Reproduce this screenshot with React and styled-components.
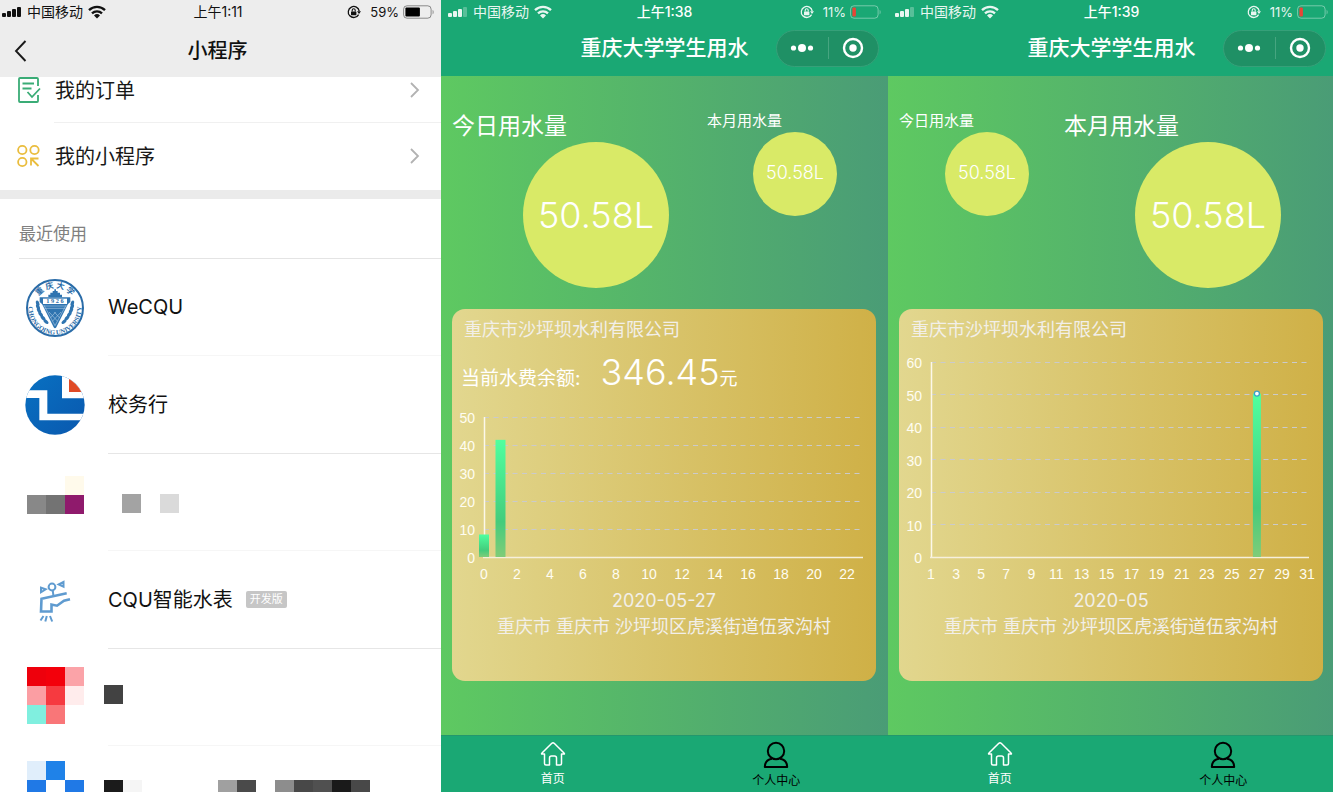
import React from "react";
import styled, { createGlobalStyle } from "styled-components";

const GlobalStyle = createGlobalStyle`
  *, *::before, *::after { box-sizing: border-box; }
  body {
    margin: 0;
    overflow-x: hidden;
    background: #fff;
    font-family: Inter, "Noto Sans CJK SC", sans-serif;
    -webkit-font-smoothing: antialiased;
  }
  a { color: inherit; text-decoration: none; }
  button { font: inherit; color: inherit; border: 0; padding: 0; background: none; cursor: pointer; }
  h1, h2, p { margin: 0; font-size: inherit; font-weight: inherit; }
  svg { display: block; flex: none; }
`;

const Page = styled.main`
  display: grid;
  grid-template-columns: 441fr 447fr 447fr;
  width: calc(100% + 2px);
  min-height: 100vh;
`;

const Phone = styled.section`
  display: flex;
  flex-direction: column;
  min-width: 0;
  background: ${(p) => p.$background || "#fff"};
`;

/* ---------- status bar ---------- */

const StatusRow = styled.div`
  display: grid;
  grid-template-columns: 1fr auto 1fr;
  align-items: center;
  height: 24px;
  padding: 0 7px 0 ${(p) => (p.$light ? 7 : 2)}px;
  background: ${(p) => (p.$light ? "#1aa874" : "#ededed")};
  color: ${(p) => (p.$light ? "#fff" : "#111")};
  font-size: 14px;
  line-height: 20px;
`;

const StatusGroup = styled.div`
  display: flex;
  align-items: center;
  justify-content: ${(p) => (p.$end ? "flex-end" : "flex-start")};
  gap: ${(p) => (p.$end ? 4 : 5)}px;
  opacity: ${(p) => (p.$soft ? 0.9 : 1)};
`;

const Clock = styled.time`
  font-size: 14px;
  font-weight: ${(p) => (p.$light ? 500 : 400)};
`;

const Percent = styled.span`
  font-size: 13px;
  padding-left: 5px;
`;

function StatusBar({ time, percent, light }) {
  const bars = [4, 6, 8, 10];
  return (
    <StatusRow $light={light}>
      <StatusGroup $soft={light}>
        <svg width="20" height="12" fill="currentColor" aria-hidden="true">
          {bars.map((h, i) => (
            <rect key={h} x={i * 5} y={11 - h} width="4" height={h} rx="1" opacity={light && i === 3 ? 0.3 : 1} />
          ))}
        </svg>
        <span>中国移动</span>
        <svg width="18" height="14" viewBox="0 0 18 14" aria-hidden="true">
          <g fill="none" stroke="currentColor" strokeWidth="2.3">
            <path d="M1 5.2a11.5 11.5 0 0 1 16 0" />
            <path d="M4 8.4a7.2 7.2 0 0 1 10 0" />
          </g>
          <path d="M9 13.4 6 10.4a4.4 4.4 0 0 1 6 0z" fill="currentColor" />
        </svg>
      </StatusGroup>
      <Clock $light={light}>{time}</Clock>
      <StatusGroup $end $soft={light}>
        <svg width="14" height="14" viewBox="0 0 14 14" aria-hidden="true">
          <path d="M11.6 9.6a5.500 5.500 0 1 1 .6-3.400" fill="none" stroke="currentColor" strokeWidth="1.300" />
          <path d="M10 6.2h4l-2 2.8z" fill="currentColor" />
          <rect x="4" y="6.4" width="5.400" height="3.800" rx=".5" fill="currentColor" />
          <path d="M5.2 6.600V5.200a1.500 1.500 0 0 1 3 0v1.400" fill="none" stroke="currentColor" strokeWidth="1.100" />
        </svg>
        <Percent>{percent}%</Percent>
        <svg width="31" height="14" viewBox="0 0 31 14" aria-hidden="true">
          <rect x=".6" y=".8" width="27.5" height="12.4" rx="3.4" fill="none" stroke="currentColor" strokeOpacity=".45" />
          <rect x="2.4" y="2.4" width={light ? 3.5 : 14.5} height="9.2" rx="1" fill={light ? "#ff3b30" : "#000"} />
          <path d="M29.6 5v4.2c1.4-.5 1.4-3.7 0-4.2z" fill="currentColor" fillOpacity=".45" />
        </svg>
      </StatusGroup>
    </StatusRow>
  );
}

/* ---------- mini program list ---------- */

const ListHeader = styled.header`
  display: grid;
  grid-template-columns: 1fr auto 1fr;
  align-items: center;
  height: 53px;
  padding: 0 20px 0 14px;
  background: #ededed;
  color: #111;
`;

const Title = styled.h1`
  font-size: ${(p) => p.$size || 20}px;
  line-height: 28px;
  font-weight: 500;
`;

const BackButton = styled.button`
  width: 14px;
  height: 24px;
`;

const MenuRow = styled.a`
  display: flex;
  align-items: flex-start;
  padding: ${(p) => (p.$scrolled ? 0 : 20)}px 20px 0 17px;
  height: ${(p) => (p.$scrolled ? 46 : 67)}px;
  gap: 14px;
  color: #181818;
  font-size: 20px;
  line-height: 28px;
`;

const MenuLabel = styled.span`
  flex: 1;
`;

const InsetRule = styled.hr`
  width: calc(100% - 54px);
  height: 1px;
  margin: -1px 0 0 54px;
  border: 0;
  background: #f0f0f0;
`;

const SectionBlock = styled.div`
  height: 69px;
  border-top: 9px solid #ebebeb;
`;

const SectionLabel = styled.h2`
  height: 60px;
  margin-left: 19px;
  padding-top: 22px;
  border-bottom: 1px solid #e4e4e4;
  color: #808080;
  font-size: 17px;
  line-height: 26px;
`;

const AppList = styled.div`
  display: grid;
  grid-auto-rows: 97px 98px;
  align-content: start;
  flex: 1 1 0;
  min-height: 0;
  overflow: hidden;
`;

const AppRow = styled.a`
  display: flex;
  align-items: center;
  gap: 23px;
  padding-left: 25px;
`;

const AppBody = styled.div`
  display: flex;
  align-items: center;
  flex: 1;
  height: 100%;
  gap: 13px;
  border-bottom: 1px solid #f6f6f6;
  color: #111;
  font-size: 20px;
  line-height: 30px;

  ${AppRow}:nth-child(even) & { border-color: #e6e6e6; }
`;

const Badge = styled.span`
  padding: 0 4px;
  border-radius: 2px;
  background: #c6c6c6;
  color: #fff;
  font-size: 11px;
  line-height: 17px;
`;

const Chevron = () => (
  <svg width="12" height="26" viewBox="0 0 12 26" fill="none" stroke="#b2b2b2" strokeWidth="1.8" aria-hidden="true">
    <path d="m2 6 7 7-7 7" />
  </svg>
);

const OrderIcon = () => (
  <svg width="24" height="26" viewBox="0 0 24 26" fill="none" stroke="#3aac76" strokeWidth="1.8" aria-hidden="true">
    <path d="M21 9V2a1 1 0 0 0-1-1H3a1 1 0 0 0-1 1v22a1 1 0 0 0 1 1h17a1 1 0 0 0 1-1v-6" />
    <path d="M5.500 6.500H17M5.500 11.500h9M10.500 15l4.500 5L23 11.500" />
  </svg>
);

const MiniIcon = () => (
  <svg width="24" height="26" viewBox="0 0 24 26" fill="none" stroke="#eabd3e" strokeWidth="1.8" aria-hidden="true">
    <circle cx="5.300" cy="7" r="4.200" />
    <circle cx="17.500" cy="7" r="4.200" />
    <circle cx="5.300" cy="19" r="4.200" />
    <path d="M14 22.500V15.500h7.500M14.500 16l7 7" />
  </svg>
);

function UniversityEmblem() {
  const leaves = [0, 1, 2, 3, 4, 5];
  return (
    <svg width="60" height="60" viewBox="-90 -90 180 180" aria-hidden="true">
      <defs>
        <path id="emblem-top" d="M-54 -26A60 60 0 0 1 54 -26" />
        <path id="emblem-bottom" d="M-77 -22A80 80 0 1 0 77 -22" />
      </defs>
      <circle r="84" fill="#fff" stroke="#2a6ca8" strokeWidth="6" />
      <g fill="#2a6ca8" fontWeight="700">
        <text fontFamily="Noto Sans CJK SC, sans-serif" fontSize="24">
          <textPath href="#emblem-top" startOffset="50%" textAnchor="middle">重 庆 大 学</textPath>
        </text>
        <text fontFamily="Liberation Serif, serif" fontSize="20">
          <textPath href="#emblem-bottom" startOffset="50%" textAnchor="middle">CHONGQING UNIVERSITY</textPath>
        </text>
      </g>
      <g fill="#2f74b0">
        <path d="M-20-32v-8h6v-6h7v-5h5v-5h5v5h5v5h7v6h6v8z" />
        <path d="M-46-32h92v14l-7 6L4 58q-4 6-8 0L-39-12l-7-6z" />
        {[-1, 1].map((side) =>
          leaves.map((n) => (
            <ellipse
              key={side + "-" + n}
              cx={side * (52 - n * n)}
              cy={-14 + n * 11}
              rx="5"
              ry="9"
              transform={`rotate(${side * (20 + n * 6)} ${side * (52 - n * n)} ${-14 + n * 11})`}
            />
          ))
        )}
      </g>
      <rect x="-36" y="-28" width="72" height="16" fill="#fff" />
      <text y="-14" textAnchor="middle" fontFamily="Liberation Serif, serif" fontSize="19" fontWeight="700" fill="#2a6ca8">
        1 9 2 6
      </text>
      <g stroke="#a4c6e2" strokeWidth="2" fill="none">
        <path d="M-35-6h70M-32 1h64" />
        <path d="m-18 12 26 28M-2 12l16 18M18 12-8 40M2 12l-16 18M-33-8 0 53 33-8" />
      </g>
    </svg>
  );
}

const CampusLogo = () => (
  <svg width="60" height="60" viewBox="75 344 180 180" aria-hidden="true">
    <defs>
      <clipPath id="campus-clip"><circle cx="165" cy="434" r="89" /></clipPath>
      <linearGradient id="campus-blue" x1="0" y1="0" x2="1" y2="1">
        <stop offset="0" stopColor="#0871c2" />
        <stop offset="1" stopColor="#0a58ae" />
      </linearGradient>
    </defs>
    <g clipPath="url(#campus-clip)">
      <rect x="75" y="344" width="180" height="180" fill="url(#campus-blue)" />
      <path d="M70 390h72v70h120v20H118v-67H70zM186 340h75v74h-75z" fill="#fff" />
    </g>
    <path d="M207 356q24 13 37 39h-37z" fill="#e04a26" />
  </svg>
);

const FaucetIcon = () => (
  <svg width="60" height="60" viewBox="0 0 60 60" fill="none" stroke="#5f9bd0" strokeWidth="2" aria-hidden="true">
    <path d="M16 17.700v4.600l4.700-3zM33.700 14.500l4.800-2.500v4.600z" />
    <circle cx="27" cy="17" r="3.400" />
    <path d="M27.800 20.500l.6 5.500" />
    <path d="M41.700 23.300 16.500 28.800 16 41.500H26.500V34.500l5.500 1.200 7-5 6-1.500" strokeWidth="2.600" />
    <path d="m18.500 46-3 4.500M21.800 46l-1.500 5.500M25 46l2.200 5.500" />
  </svg>
);

/* A pixelated, censored picture: each block is [column, row, colour]. */
function Mosaic({ blocks, top = 0, left = 0, width = 60, cell = 19 }) {
  return (
    <svg width={width} height="60" overflow="visible" shapeRendering="crispEdges" aria-hidden="true">
      {blocks.map(([c, r, color]) => (
        <rect key={c + "-" + r} x={left + c * cell} y={top + r * cell} width={cell} height={cell} fill={color} />
      ))}
    </svg>
  );
}

const apps = [
  { icon: <UniversityEmblem />, name: "WeCQU" },
  { icon: <CampusLogo />, name: "校务行" },
  {
    icon: <Mosaic left={2} top={3} blocks={[[2, 0, "#fffaeb"], [0, 1, "#888"], [1, 1, "#737373"], [2, 1, "#8f1a6c"]]} />,
    body: <Mosaic left={14} top={3} blocks={[[0, 1, "#a3a3a3"], [2, 1, "#dadada"]]} />,
  },
  { icon: <FaucetIcon />, name: "CQU智能水表", badge: "开发版" },
  {
    icon: (
      <Mosaic
        left={2}
        top={-1}
        blocks={[
          [0, 0, "#ee000c"], [1, 0, "#f3000b"], [2, 0, "#fba3a8"],
          [0, 1, "#fb9ea3"], [1, 1, "#f63a40"], [2, 1, "#ffecec"],
          [0, 2, "#80efdf"], [1, 2, "#f97678"],
        ]}
      />
    ),
    body: <Mosaic left={-4} top={-1} blocks={[[0, 1, "#424242"]]} />,
  },
  {
    icon: (
      <Mosaic
        left={2}
        top={-4}
        blocks={[[0, 0, "#e0eefb"], [1, 0, "#1f82e8"], [0, 1, "#2079e6"], [2, 1, "#2079e6"]]}
      />
    ),
    body: (
      <Mosaic
        left={-4}
        top={-4}
        blocks={[
          [0, 1, "#1b1b1b"], [1, 1, "#f5f5f5"], [6, 1, "#a0a0a0"], [7, 1, "#4a4a4a"],
          [9, 1, "#8d8d8d"], [10, 1, "#484848"], [11, 1, "#505050"], [12, 1, "#1a1a1a"], [13, 1, "#484848"],
        ]}
      />
    ),
  },
];

function ProgramList() {
  return (
    <Phone>
      <StatusBar time="上午1:11" percent={59} />
      <ListHeader>
        <BackButton type="button" aria-label="返回">
          <svg width="14" height="24" viewBox="0 0 14 24" fill="none" stroke="#1a1a1a" strokeWidth="1.900">
            <path d="m11.500 2-9.500 10 9.500 10" />
          </svg>
        </BackButton>
        <Title>小程序</Title>
      </ListHeader>
      <MenuRow href="#orders" $scrolled>
        <OrderIcon />
        <MenuLabel>我的订单</MenuLabel>
        <Chevron />
      </MenuRow>
      <InsetRule />
      <MenuRow href="#mine">
        <MiniIcon />
        <MenuLabel>我的小程序</MenuLabel>
        <Chevron />
      </MenuRow>
      <SectionBlock>
        <SectionLabel>最近使用</SectionLabel>
      </SectionBlock>
      <AppList>
        {apps.map((app, i) => (
          <AppRow key={i} href="#app">
            {app.icon}
            <AppBody>
              {app.name && <span>{app.name}</span>}
              {app.badge && <Badge>{app.badge}</Badge>}
              {app.body}
            </AppBody>
          </AppRow>
        ))}
      </AppList>
    </Phone>
  );
}

/* ---------- water usage ---------- */

const WaterHeader = styled.header`
  display: grid;
  grid-template-columns: 1fr auto 1fr;
  align-items: center;
  height: 52px;
  padding: 0 9px 4px;
  background: #1aa874;
  color: #fff;
`;

const Capsule = styled.div`
  display: grid;
  grid-template-columns: 1fr 1fr;
  justify-self: end;
  width: 103px;
  height: 37px;
  border: 1px solid #36a079;
  border-radius: 19px;
  background: #1f9065;
`;

const CapsuleButton = styled.button`
  display: flex;
  align-items: center;
  justify-content: center;
`;

const Meters = styled.div`
  display: grid;
  grid-template-columns: ${(p) => (p.$monthFirst ? "165fr 259fr" : "255fr 169fr")};
  height: 233px;
  padding: 34px 12px 0 11px;
`;

const Meter = styled.div`
  color: #fff;
`;

const MeterLabel = styled.h2`
  font-size: ${(p) => (p.$large ? 23 : 15)}px;
  line-height: ${(p) => (p.$large ? 32 : 22)}px;
  font-weight: 400;
`;

const MeterDial = styled.div`
  display: flex;
  align-items: center;
  justify-content: center;
  width: ${(p) => (p.$large ? 146 : 84)}px;
  height: ${(p) => (p.$large ? 146 : 84)}px;
  margin-left: ${(p) => (p.$large ? 71 : 46)}px;
  padding-bottom: ${(p) => (p.$large ? 0 : 3)}px;
  border-radius: 50%;
  background: #d9ea67;
  font-size: ${(p) => (p.$large ? 36 : 18)}px;
  font-weight: 300;
`;

const Card = styled.article`
  margin: 0 12px 0 11px;
  padding: 9px 0 41px;
  border-radius: 13px;
  background: linear-gradient(91deg, #e2d78f, #cfb046);
  color: #f2efe9;
  font-size: 18px;
  font-weight: 400;
`;

const Company = styled.h2`
  padding-left: 12px;
  line-height: 24px;
`;

const Balance = styled.p`
  display: flex;
  align-items: baseline;
  height: ${(p) => (p.$empty ? 11 : 66)}px;
  padding-left: 9px;
  color: #fff;
  line-height: 60px;
`;

const BalanceLabel = styled.span`
  margin-right: 20px;
  font-size: 19px;
`;

const Amount = styled.strong`
  font-size: 36px;
  font-weight: 300;
`;

const Footnotes = styled.div`
  padding-top: 4px;
  text-align: center;
  line-height: 26px;
`;

const TabBar = styled.nav`
  display: grid;
  grid-template-columns: 1fr 1fr;
  height: 57px;
  margin-top: auto;
  border-top: 1px solid #23976d;
  background: #1aa874;
`;

const Tab = styled.a`
  display: flex;
  flex-direction: column;
  align-items: center;
  padding-top: 5px;
  gap: 3px;
  color: ${(p) => (p.$active ? "#fff" : "#000")};
  font-size: 12px;
  line-height: 18px;
`;

function UsageChart({ id, max, height, labels, step, bars, barWidth, end, marker }) {
  const left = 32;
  const top = 10;
  const bottom = top + height;
  const yOf = (v) => bottom - (v / max) * height;
  const ticks = Array.from({ length: max / 10 + 1 }, (_, i) => i * 10);
  const slot = (i) => left + i * (step / 2);
  return (
    <svg width="100%" viewBox={`0 0 424 ${bottom + 26}`} role="img" aria-label="用水量">
      <defs>
        <linearGradient id={id} x1="0" y1="0" x2="0" y2="1">
          <stop offset="0" stopColor="#50ff9f" />
          <stop offset=".7" stopColor="#44cc7c" />
          <stop offset="1" stopColor="#80cc78" />
        </linearGradient>
      </defs>
      {ticks.slice(1).map((t) => (
        <path key={t} d={`M${left} ${Math.floor(yOf(t)) - 0.5}H${end - 1}`} stroke="#cacacc" strokeDasharray="5 4.5" />
      ))}
      <path d={`M32.500 ${top - 1}V${bottom}`} stroke="#fcf8ea" strokeWidth="1.500" />
      <path d={`M${left - 1} ${bottom - 0.5}H${end}`} stroke="#f6f0dc" strokeWidth="1.500" />
      {bars.map((b) => (
        <rect key={b.slot} x={slot(b.slot) - barWidth / 2} y={yOf(b.value)} width={barWidth} height={bottom - 1 - yOf(b.value)} fill={`url(#${id})`} />
      ))}
      {marker && <circle cx={slot(bars[0].slot)} cy={yOf(bars[0].value)} r="2.500" fill="#fff" stroke="#3aa0c8" strokeWidth="1.300" />}
      <g fill="#fffdf2" fontFamily="Liberation Sans, sans-serif" fontSize="14" fontWeight="400">
        {ticks.map((t) => (
          <text key={t} x="23" y={yOf(t) + 5} textAnchor="end">{t}</text>
        ))}
        {labels.map((n, i) => (
          <text key={n} x={left + i * step} y={bottom + 21} textAnchor="middle">{n}</text>
        ))}
      </g>
    </svg>
  );
}

const range = (from, to) => Array.from({ length: (to - from) / 2 + 1 }, (_, i) => from + i * 2);

const dayChart = {
  id: "bars-day",
  max: 50,
  height: 140,
  labels: range(0, 22),
  step: 33,
  bars: [{ slot: 0, value: 8.4 }, { slot: 1, value: 42.2 }],
  barWidth: 10,
  end: 411,
};

const monthChart = {
  id: "bars-month",
  max: 60,
  height: 195,
  labels: range(1, 31),
  step: 25.07,
  bars: [{ slot: 26, value: 50.58 }],
  barWidth: 8,
  end: 410,
  marker: true,
};

function WaterMeter({ label, large }) {
  return (
    <Meter>
      <MeterLabel $large={large}>{label}</MeterLabel>
      <MeterDial $large={large}>50.58L</MeterDial>
    </Meter>
  );
}

function WaterScreen({ time, month, date, balance, chart }) {
  return (
    <Phone $background="linear-gradient(90deg, #5ec961, #4a9c76)">
      <StatusBar time={time} percent={11} light />
      <WaterHeader>
        <span />
        <Title $size={21}>重庆大学学生用水</Title>
        <Capsule>
          <CapsuleButton type="button" aria-label="更多">
            <svg width="24" height="10" fill="#fff">
              <circle cx="3.500" cy="5" r="2.600" />
              <circle cx="12" cy="5" r="4" />
              <circle cx="20.500" cy="5" r="2.600" />
            </svg>
          </CapsuleButton>
          <CapsuleButton type="button" aria-label="关闭">
            <svg width="50" height="22" viewBox="0 0 50 22">
              <path d="M.5 0v22" stroke="#46a580" />
              <circle cx="25" cy="11" r="9" fill="none" stroke="#fff" strokeWidth="2.400" />
              <circle cx="25" cy="11" r="3.700" fill="#fff" />
            </svg>
          </CapsuleButton>
        </Capsule>
      </WaterHeader>
      <Meters $monthFirst={month}>
        <WaterMeter label="今日用水量" large={!month} />
        <WaterMeter label="本月用水量" large={month} />
      </Meters>
      <Card>
        <Company>重庆市沙坪坝水利有限公司</Company>
        <Balance $empty={!balance}>
          {balance && (
            <>
              <BalanceLabel>当前水费余额:</BalanceLabel>
              <Amount>{balance}</Amount>
              <span>元</span>
            </>
          )}
        </Balance>
        <UsageChart {...chart} />
        <Footnotes>
          <p>{date}</p>
          <p>重庆市 重庆市 沙坪坝区虎溪街道伍家沟村</p>
        </Footnotes>
      </Card>
      <TabBar>
        <Tab href="#home" $active>
          <svg width="26" height="26" viewBox="0 0 26 26" fill="none" stroke="currentColor" strokeWidth="1.500" strokeLinejoin="round" aria-hidden="true">
            <path d="M4.500 13H2.200Q1 13 2 12L11.800 2.300q1.200-1 2.400 0L24 12q1 1-.2 1h-2.300v9.500q0 1.500-1.500 1.500h-3.500v-7q0-2-2-2h-3q-2 0-2 2v7H6q-1.500 0-1.500-1.500z" />
          </svg>
          首页
        </Tab>
        <Tab href="#profile">
          <svg width="26" height="28" viewBox="0 0 26 26" fill="none" stroke="currentColor" strokeWidth="2" aria-hidden="true">
            <circle cx="13" cy="9" r="8.200" />
            <path d="M9 16.800Q1.800 18 1.800 25h22.400q0-7-7.200-8.200" strokeLinejoin="round" />
          </svg>
          个人中心
        </Tab>
      </TabBar>
    </Phone>
  );
}

export default function App() {
  return (
    <>
      <GlobalStyle />
      <Page>
        <ProgramList />
        <WaterScreen time="上午1:38" date="2020-05-27" balance="346.45" chart={dayChart} />
        <WaterScreen time="上午1:39" date="2020-05" month chart={monthChart} />
      </Page>
    </>
  );
}
